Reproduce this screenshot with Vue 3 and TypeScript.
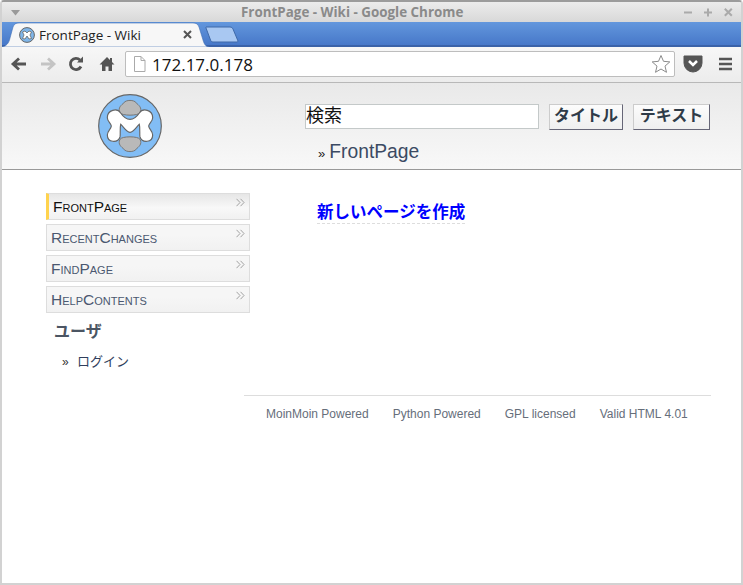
<script setup lang="ts">
const nav: { label: string; current?: boolean }[] = [
  { label: 'FrontPage', current: true },
  { label: 'RecentChanges' },
  { label: 'FindPage' },
  { label: 'HelpContents' },
]
const badges: string[] = ['MoinMoin Powered', 'Python Powered', 'GPL licensed', 'Valid HTML 4.01']
</script>

<template>
  <div class="window">
    <div class="titlebar">
      <svg class="menu-arrow" width="12" height="6" viewBox="0 0 12 6"><path d="M1 0h9L5.500 5.500z" fill="#9a9a9a" /></svg>
      <span class="title">FrontPage - Wiki - Google Chrome</span>
      <div class="winbtns">
        <svg width="9" height="9" viewBox="0 0 9 9"><path d="M0 4.500h8" stroke="#aaa" stroke-width="2" /></svg>
        <svg width="9" height="9" viewBox="0 0 9 9"><path d="M0 4.500h8M4 .5v8" stroke="#aaa" stroke-width="2" /></svg>
        <svg width="9" height="9" viewBox="0 0 9 9"><path d="M.8 .8l7 7M7.800 .8l-7 7" stroke="#aaa" stroke-width="2" /></svg>
      </div>
    </div>
    <div class="tabstrip">
      <div class="tab">
        <svg class="tab-bg" width="208" height="25" viewBox="0 0 208 25">
          <path d="M0 25C5 25 8 21 9 16L12 5C13 2 15 1 18 1H192C195 1 197 2 198 5L202 18C203 22 205 25 208 25Z" fill="#f7f7f7" stroke="#3f6fb5" stroke-width="0.6" />
        </svg>
        <svg class="favicon" width="16" height="16" viewBox="0 0 16 16">
          <circle cx="8" cy="8" r="7.400" fill="#7fb6ea" stroke="#666" />
          <path d="M3.500 5L6 4L8 6L10 4L12.500 5L11 8L12.500 11.500L10 12L8 9L6 12L3.500 11.500L5 8Z" fill="#fff" stroke="#666" stroke-width="0.8" />
        </svg>
        <span class="tab-title">FrontPage - Wiki</span>
        <svg class="tab-close" width="9" height="9" viewBox="0 0 9 9"><path d="M1 1l7 7M8 1l-7 7" stroke="#555" stroke-width="2" /></svg>
      </div>
      <svg class="newtab" width="34" height="17" viewBox="0 0 34 17">
        <path d="M1 1H25C26.500 1 27.500 2 28 3L33 15C33 15.600 32.500 16 32 16H8C6.500 16 6 15.300 5.500 14L1 2C.8 1.400 .9 1 1 1Z" fill="#a9c8f2" stroke="#3f69a8" />
      </svg>
    </div>
    <div class="toolbar">
      <svg class="tool" width="18" height="18" viewBox="0 0 18 18"><path d="M16 9H4M9 3.500L3 9l6 5.500" fill="none" stroke="#555" stroke-width="2.800" /></svg>
      <svg class="tool" width="18" height="18" viewBox="0 0 18 18"><path d="M2 9h12M9 3.500L15 9l-6 5.500" fill="none" stroke="#c4c4c4" stroke-width="2.800" /></svg>
      <svg class="tool" width="18" height="18" viewBox="0 0 18 18"><path d="M14 11.500A5.600 5.600 0 1 1 13 5" fill="none" stroke="#555" stroke-width="2.800" /><path d="M10 7.500h6v-6z" fill="#555" /></svg>
      <svg class="tool home" width="18" height="18" viewBox="0 0 18 18"><path d="M9 2L1.500 9.500H4V16h3.500v-4.500h3V16H14V9.500h2.500L14 7V3h-2v2z" fill="#555" /></svg>
      <div class="omnibox">
        <svg width="13" height="16" viewBox="0 0 13 16"><path d="M1.500 .5H8L12 4.500V15.500H1.500Z" fill="#fff" stroke="#aaa" /><path d="M8 .5V4.500H12" fill="none" stroke="#aaa" /></svg>
        <span class="url">172.17.0.178</span>
        <svg class="star" width="20" height="20" viewBox="0 0 20 20"><path d="M10 1.500l2.500 5.800 6.300.6-4.800 4.200 1.500 6.200L10 15l-5.500 3.300L6 12.100 1.200 7.900l6.300-.6z" fill="#fff" stroke="#8a8a8a" /></svg>
      </div>
      <svg class="pocket" width="20" height="18" viewBox="0 0 20 18"><path d="M1 1H19V8A9 9 0 0 1 1 8Z" fill="#555" stroke="#555" stroke-linejoin="round" /><path d="M6 6l4 4 4-4" fill="none" stroke="#fff" stroke-width="2.500" /></svg>
      <svg class="hamburger" width="14" height="14" viewBox="0 0 14 14"><path d="M0 2h13M0 7h13M0 12h13" stroke="#555" stroke-width="2.600" /></svg>
    </div>
    <header class="wiki-header">
      <div class="logo-slot">
        <svg width="66" height="66" viewBox="51 26 198 198">
          <circle cx="150" cy="125" r="94" fill="#82bdf5" stroke="#666" stroke-width="3.500" />
          <path d="M120 85C112 70 125 62 132 55C138 46 162 46 168 55C175 62 188 70 180 85C175 95 125 95 120 85Z" fill="#b9b9b9" stroke="#777" stroke-width="3" />
          <path d="M120 165C112 180 125 188 132 195C138 204 162 204 168 195C175 188 188 180 180 165C175 155 125 155 120 165Z" fill="#b9b9b9" stroke="#777" stroke-width="3" />
          <path d="M82 100C82 76 112 70 122 86C130 98 140 105 150 105C160 105 170 98 178 86C188 70 218 76 218 100C218 112 207 116 206 125C207 135 218 140 218 152C218 176 186 176 180 158C178 150 181 132 178 120C170 126 162 142 150 144C138 142 130 126 122 120C119 132 122 150 120 158C114 176 82 176 82 152C82 140 93 135 94 125C93 116 82 112 82 100Z" fill="#fff" stroke="#666" stroke-width="3.500" />
        </svg>
      </div>
      <div class="header-main">
        <form class="search" @submit.prevent>
          <input class="search-input" type="text" value="検索" />
          <button class="search-btn">タイトル</button>
          <button class="search-btn">テキスト</button>
        </form>
        <div class="pagetrail"><span class="raquo">»</span><span class="pagename">FrontPage</span></div>
      </div>
    </header>
    <main class="body">
      <aside class="sidebar">
        <ul class="navlist">
          <li v-for="item in nav" :key="item.label" class="navitem" :class="{ current: item.current }">
            <span>{{ item.label }}</span>
            <svg class="nav-arrow" width="9" height="9" viewBox="0 0 9 9"><path d="M.5 .8L4 4.500L.5 8.200M4.500 .8L8 4.500L4.500 8.200" fill="none" stroke="#999" stroke-width="0.9" /></svg>
          </li>
        </ul>
        <h4 class="user-title">ユーザ</h4>
        <div class="user-link"><span class="raquo-small">»</span><span>ログイン</span></div>
      </aside>
      <section class="content">
        <div class="content-main">
          <a class="create" href="#">新しいページを作成</a>
        </div>
        <footer class="badges">
          <span v-for="b in badges" :key="b">{{ b }}</span>
        </footer>
      </section>
    </main>
  </div>
</template>

<style>
html, body { margin: 0; background: #fff; }
</style>

<style scoped>
.window {
  width: 743px;
  height: 585px;
  box-sizing: border-box;
  display: flex;
  flex-direction: column;
  overflow: hidden;
  background: #fff;
  border: 2px solid #d2d2d2;
  border-top-color: #9c9c9c;
  border-radius: 4px 4px 0 0;
  font-family: "Liberation Sans", "Noto Sans CJK JP", sans-serif;
}
.titlebar {
  height: 20px;
  flex: none;
  display: flex;
  align-items: center;
  padding-left: 239px;
  position: relative;
  background: linear-gradient(#ececec, #d8d8d8);
}
.menu-arrow { position: absolute; left: 8px; top: 8px; }
.title {
  font-family: "Open Sans", sans-serif;
  font-size: 13.400px;
  font-weight: 700;
  color: #8a8a8a;
  white-space: nowrap;
}
.winbtns {
  position: absolute;
  right: 8px;
  top: 6px;
  display: flex;
  gap: 11px;
}
.tabstrip {
  height: 25px;
  flex: none;
  display: flex;
  align-items: flex-end;
  background: linear-gradient(#6397dd, #4778c9 23px, #3a62a8 23px);
}
.tab {
  position: relative;
  width: 207px;
  height: 25px;
  flex: none;
  display: flex;
  align-items: center;
  padding: 0 0 0 17px;
  box-sizing: border-box;
}
.tab-bg { position: absolute; left: -1px; top: 0; }
.favicon { position: relative; flex: none; }
.tab-title {
  position: relative;
  margin-left: 4px;
  font-family: "Open Sans", sans-serif;
  font-size: 13.500px;
  color: #222;
  white-space: nowrap;
}
.tab-close {
  position: relative;
  margin-left: 42px;
  flex: none;
}
.newtab { margin: 0 0 4px -4px; flex: none; position: relative; }
.toolbar {
  height: 36px;
  flex: none;
  display: flex;
  align-items: center;
  padding: 0 0 1px 8px;
  box-sizing: border-box;
  background: linear-gradient(#f7f7f7, #ececec);
  border-bottom: 1px solid #b8b8b8;
}
.tool { flex: none; margin-right: 10.500px; }
.home { margin-left: 2px; margin-right: 11.500px; }
.omnibox {
  flex: none;
  width: 550px;
  height: 26px;
  box-sizing: border-box;
  margin-left: -2px;
  display: flex;
  align-items: center;
  padding: 0 3px 0 7px;
  background: #fff;
  border: 1px solid #bdbdbd;
  border-radius: 2px;
}
.url {
  flex: 1;
  margin-left: 6px;
  font-family: "Open Sans", sans-serif;
  font-size: 17px;
  color: #111;
}
.star { flex: none; }
.pocket { flex: none; margin-left: 8px; }
.hamburger { flex: none; margin-left: 16px; }
.wiki-header {
  height: 87px;
  flex: none;
  display: flex;
  box-sizing: border-box;
  background: linear-gradient(#e9e9e9, #f8f8f8);
  border-bottom: 1px solid #999;
}
.logo-slot {
  width: 256px;
  flex: none;
  display: flex;
  justify-content: center;
  padding-top: 10px;
  box-sizing: border-box;
}
.logo-slot svg { display: block; }
.header-main { padding: 21px 0 0 47px; }
.search { display: flex; align-items: flex-start; margin: 0; }
.search-input {
  width: 234px;
  height: 25px;
  box-sizing: border-box;
  padding: 0 0 5px;
  border: 1px solid #c4c9c9;
  background: #fff;
  font-family: "Liberation Sans", "Noto Sans CJK JP", sans-serif;
  font-size: 18px;
  color: #111;
  outline: none;
}
.search-btn {
  height: 26px;
  padding: 0 0 3px;
  margin-left: 10px;
  box-sizing: border-box;
  background: linear-gradient(#fcfcfc, #efefef);
  border: 1px solid;
  border-color: #ccc #667 #667 #ccc;
  font-family: "Liberation Sans", "Noto Sans CJK JP", sans-serif;
  font-size: 16px;
  line-height: 16px;
  font-weight: 700;
  color: #2f3b48;
  width: 74px;
}
.search-btn + .search-btn { width: 77px; }
.pagetrail {
  display: flex;
  align-items: baseline;
  margin: 11px 0 0 13px;
  color: #3b4a63;
}
.raquo { font-size: 13px; color: #222; margin-right: 4px; }
.pagename { font-size: 19.300px; }
.body {
  flex: 1;
  display: flex;
  min-height: 0;
}
.sidebar {
  width: 204px;
  flex: none;
  margin: 23px 0 0 44px;
}
.navlist {
  list-style: none;
  margin: 0;
  padding: 0;
  display: flex;
  flex-direction: column;
  gap: 4px;
}
.navitem {
  position: relative;
  height: 27px;
  box-sizing: border-box;
  padding: 0 0 0 4px;
  line-height: 26px;
  background: linear-gradient(#f6f6f6 40%, #f1f1f1);
  border: 1px solid #ddd;
  font-size: 15.500px;
  font-variant: small-caps;
  color: #4b5870;
}
.navitem.current {
  border-left: 3px solid #ffd34e;
  padding-left: 4px;
  color: #111;
  background: linear-gradient(#e6e6e6, #f8f8f8 55%, #f1f1f1);
}
.nav-arrow {
  position: absolute;
  right: 4px;
  top: 4px;
}
.user-title {
  margin: 9px 0 0 8px;
  font-size: 16px;
  font-weight: 700;
  line-height: 20px;
  color: #4b5563;
}
.user-link {
  display: flex;
  align-items: baseline;
  margin: 10px 0 0 16px;
  font-size: 13px;
  line-height: 20px;
  color: #2f3e5c;
}
.raquo-small { width: 15px; color: #333; font-size: 12px; }
.content {
  flex: 1;
  margin-left: -6px;
  min-width: 0;
}
.content-main {
  height: 225px;
  box-sizing: border-box;
  padding: 32px 0 0 73px;
}
.create {
  display: inline-block;
  font-size: 16.500px;
  font-weight: 700;
  line-height: 21px;
  color: #00f;
  text-decoration: none;
  border-bottom: 1px dashed #ddd;
}
.badges {
  width: 467px;
  box-sizing: border-box;
  border-top: 1px solid #ddd;
  padding: 11px 0 0 22px;
  display: flex;
  gap: 24px;
  font-size: 12px;
  line-height: 15px;
  color: #666e7a;
}
</style>
